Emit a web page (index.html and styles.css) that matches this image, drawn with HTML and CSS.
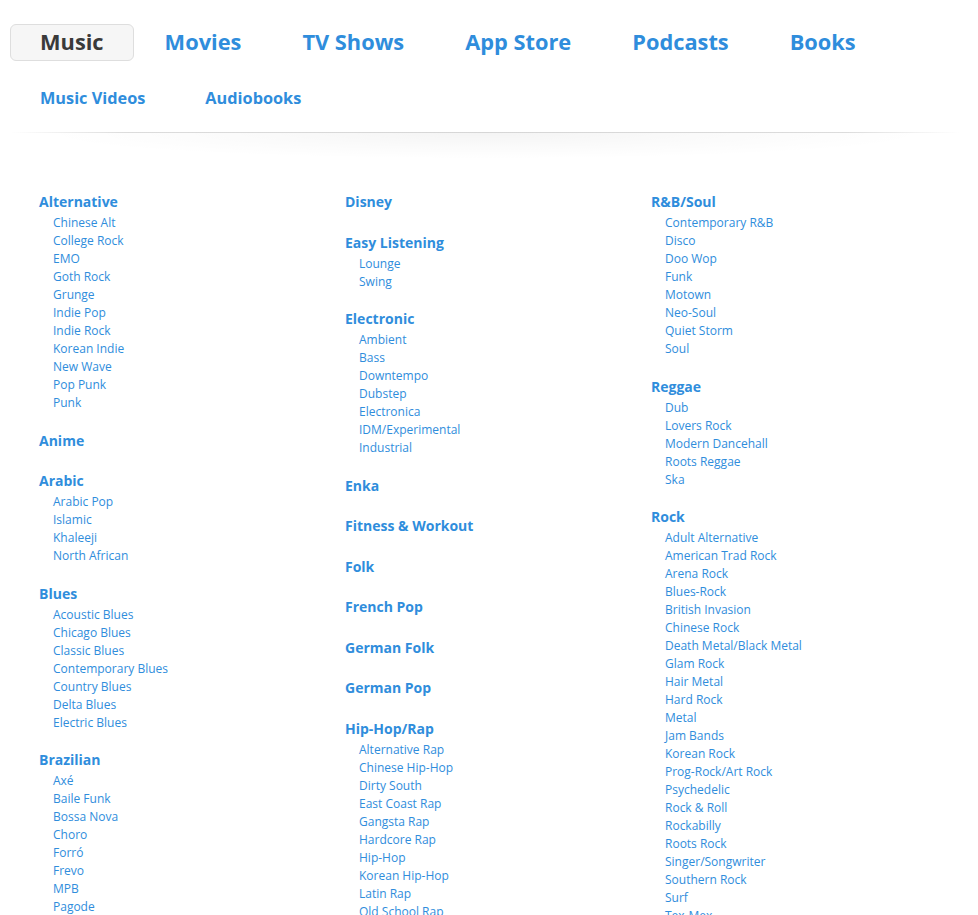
FILE: index.html
```html
<!DOCTYPE html>
<html lang="en">
<head>
<meta charset="utf-8">
<title>Music Genres</title>
<link rel="stylesheet" href="styles.css">
</head>
<body>
<header class="nav">
  <nav class="tabs">
    <a class="tab active">Music</a>
    <a class="tab">Movies</a>
    <a class="tab">TV Shows</a>
    <a class="tab">App Store</a>
    <a class="tab">Podcasts</a>
    <a class="tab">Books</a>
  </nav>
  <nav class="subtabs">
    <a class="subtab">Music Videos</a>
    <a class="subtab">Audiobooks</a>
  </nav>
  <div class="divider"></div>
</header>
<main class="columns">
  <div class="col">
    <section class="genre"><h3>Alternative</h3>
      <ul><li>Chinese Alt</li><li>College Rock</li><li>EMO</li><li>Goth Rock</li><li>Grunge</li><li>Indie Pop</li><li>Indie Rock</li><li>Korean Indie</li><li>New Wave</li><li>Pop Punk</li><li>Punk</li></ul>
    </section>
    <section class="genre"><h3>Anime</h3></section>
    <section class="genre"><h3>Arabic</h3>
      <ul><li>Arabic Pop</li><li>Islamic</li><li>Khaleeji</li><li>North African</li></ul>
    </section>
    <section class="genre"><h3>Blues</h3>
      <ul><li>Acoustic Blues</li><li>Chicago Blues</li><li>Classic Blues</li><li>Contemporary Blues</li><li>Country Blues</li><li>Delta Blues</li><li>Electric Blues</li></ul>
    </section>
    <section class="genre"><h3>Brazilian</h3>
      <ul><li>Axé</li><li>Baile Funk</li><li>Bossa Nova</li><li>Choro</li><li>Forró</li><li>Frevo</li><li>MPB</li><li>Pagode</li><li>Samba</li><li>Sertanejo</li></ul>
    </section>
  </div>
  <div class="col">
    <section class="genre"><h3>Disney</h3></section>
    <section class="genre"><h3>Easy Listening</h3>
      <ul><li>Lounge</li><li>Swing</li></ul>
    </section>
    <section class="genre"><h3>Electronic</h3>
      <ul><li>Ambient</li><li>Bass</li><li>Downtempo</li><li>Dubstep</li><li>Electronica</li><li>IDM/Experimental</li><li>Industrial</li></ul>
    </section>
    <section class="genre"><h3>Enka</h3></section>
    <section class="genre"><h3>Fitness &amp; Workout</h3></section>
    <section class="genre"><h3>Folk</h3></section>
    <section class="genre"><h3>French Pop</h3></section>
    <section class="genre"><h3>German Folk</h3></section>
    <section class="genre"><h3>German Pop</h3></section>
    <section class="genre"><h3>Hip-Hop/Rap</h3>
      <ul><li>Alternative Rap</li><li>Chinese Hip-Hop</li><li>Dirty South</li><li>East Coast Rap</li><li>Gangsta Rap</li><li>Hardcore Rap</li><li>Hip-Hop</li><li>Korean Hip-Hop</li><li>Latin Rap</li><li>Old School Rap</li><li>Rap</li></ul>
    </section>
  </div>
  <div class="col">
    <section class="genre"><h3>R&amp;B/Soul</h3>
      <ul><li>Contemporary R&amp;B</li><li>Disco</li><li>Doo Wop</li><li>Funk</li><li>Motown</li><li>Neo-Soul</li><li>Quiet Storm</li><li>Soul</li></ul>
    </section>
    <section class="genre"><h3>Reggae</h3>
      <ul><li>Dub</li><li>Lovers Rock</li><li>Modern Dancehall</li><li>Roots Reggae</li><li>Ska</li></ul>
    </section>
    <section class="genre"><h3>Rock</h3>
      <ul><li>Adult Alternative</li><li>American Trad Rock</li><li>Arena Rock</li><li>Blues-Rock</li><li>British Invasion</li><li>Chinese Rock</li><li>Death Metal/Black Metal</li><li>Glam Rock</li><li>Hair Metal</li><li>Hard Rock</li><li>Metal</li><li>Jam Bands</li><li>Korean Rock</li><li>Prog-Rock/Art Rock</li><li>Psychedelic</li><li>Rock &amp; Roll</li><li>Rockabilly</li><li>Roots Rock</li><li>Singer/Songwriter</li><li>Southern Rock</li><li>Surf</li><li>Tex-Mex</li></ul>
    </section>
  </div>
</main>
</body>
</html>
```

FILE: styles.css
```css
html, body {
  margin: 0;
  padding: 0;
  background: #ffffff;
  font-family: "Open Sans", "Liberation Sans", sans-serif;
  color: #2f8ddc;
}

a {
  color: #2f8ddc;
  text-decoration: none;
  cursor: pointer;
}

.nav {
  padding: 24px 0 0 10px;
}

.tabs {
  display: flex;
  gap: 1px;
}

.tab {
  height: 35px;
  line-height: 34px;
  padding: 0 29px;
  border: 1px solid transparent;
  border-radius: 6px;
  font-size: 21.8px;
  font-weight: 700;
}

.tab.active {
  background: #f6f6f6;
  border-color: #dedede;
  color: #3a3a3a;
}

.subtabs {
  display: flex;
  margin-top: 25px;
}

.subtab {
  padding: 0 30px;
  line-height: 24px;
  font-size: 16.3px;
  font-weight: 700;
}

.divider {
  position: relative;
  margin: 22px 18px 0 0;
  height: 1px;
  background: linear-gradient(to right, rgba(0,0,0,0) 0%, #dcdcdc 12%, #d6d6d6 50%, #dcdcdc 88%, rgba(0,0,0,0) 100%);
}

.divider::after {
  content: "";
  position: absolute;
  left: 3%;
  right: 3%;
  top: 1px;
  height: 26px;
  background: radial-gradient(ellipse 50% 100% at 50% 0%, rgba(0,0,0,0.045) 0%, rgba(0,0,0,0.02) 50%, rgba(0,0,0,0) 100%);
}

.columns {
  display: grid;
  grid-template-columns: repeat(3, 306px);
  margin-top: 57px;
  padding-left: 39px;
}

.genre {
  margin-bottom: 16.5px;
}

.genre h3 {
  margin: 0;
  font-size: 14px;
  line-height: 24px;
  font-weight: 700;
}

.genre ul {
  list-style: none;
  margin: 0;
  padding: 0 0 0 14px;
}

.genre li {
  font-size: 12px;
  line-height: 18px;
}
```
